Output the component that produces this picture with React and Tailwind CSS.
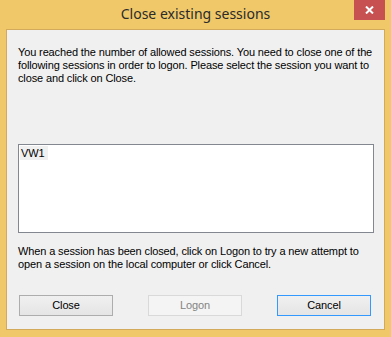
export default function App() {
  const body = { fontFamily: '"Liberation Sans", Arial, sans-serif' };
  return (
    <div className="w-[391px] h-[337px] bg-[#F0C86A] flex flex-col overflow-hidden" style={body}>
      <div className="h-[29px] relative flex items-start justify-center">
        <div
          className="mt-[4px] text-[14px] leading-[20px] text-[#2B2B2B]"
          style={{ fontFamily: '"Noto Sans", "Open Sans", sans-serif' }}
        >
          Close existing sessions
        </div>
        <div className="absolute right-[6px] top-0 w-[31px] h-[20px] bg-[#C75050] flex items-center justify-center">
          <svg width="9" height="8" viewBox="0 0 9 8">
            <path d="M1 0.5 L8 7.5 M8 0.5 L1 7.5" stroke="#fff" strokeWidth="2" />
          </svg>
        </div>
      </div>
      <div className="mx-[6px] h-[301px] border border-[#D3AA5C] bg-[#F0F0F0] flex flex-col text-[11px] leading-[13px] tracking-[-0.13px] text-black">
        <div className="ml-[11px] mt-[16px] whitespace-nowrap">
          You reached the number of allowed sessions. You need to close one of the
          <br />
          following sessions in order to logon. Please select the session you want to
          <br />
          close and click on Close.
        </div>
        <div className="ml-[11px] mt-[59px] w-[356px] h-[89px] border border-[#828790] bg-white flex flex-col items-start">
          <div className="ml-[1px] mt-[1px] w-[28px] h-[14px] bg-[#F0F0F0] leading-[14px] pl-[1px]">VW1</div>
        </div>
        <div className="ml-[11px] mt-[12px] whitespace-nowrap">
          When a session has been closed, click on Logon to try a new attempt to
          <br />
          open a session on the local computer or click Cancel.
        </div>
        <div className="ml-[12px] mt-[24px] flex gap-[35px]">
          <div className="w-[94px] h-[21px] border border-[#ADADAD] bg-gradient-to-b from-[#F0F0F0] to-[#E5E5E5] flex items-center justify-center text-black">
            Close
          </div>
          <div className="w-[94px] h-[21px] border border-[#D9D9D9] bg-[#F4F4F4] flex items-center justify-center text-[#838383]">
            Logon
          </div>
          <div className="w-[94px] h-[21px] border border-[#3399FF] bg-gradient-to-b from-[#F0F0F0] to-[#E5E5E5] flex items-center justify-center text-black">
            Cancel
          </div>
        </div>
      </div>
    </div>
  );
}
